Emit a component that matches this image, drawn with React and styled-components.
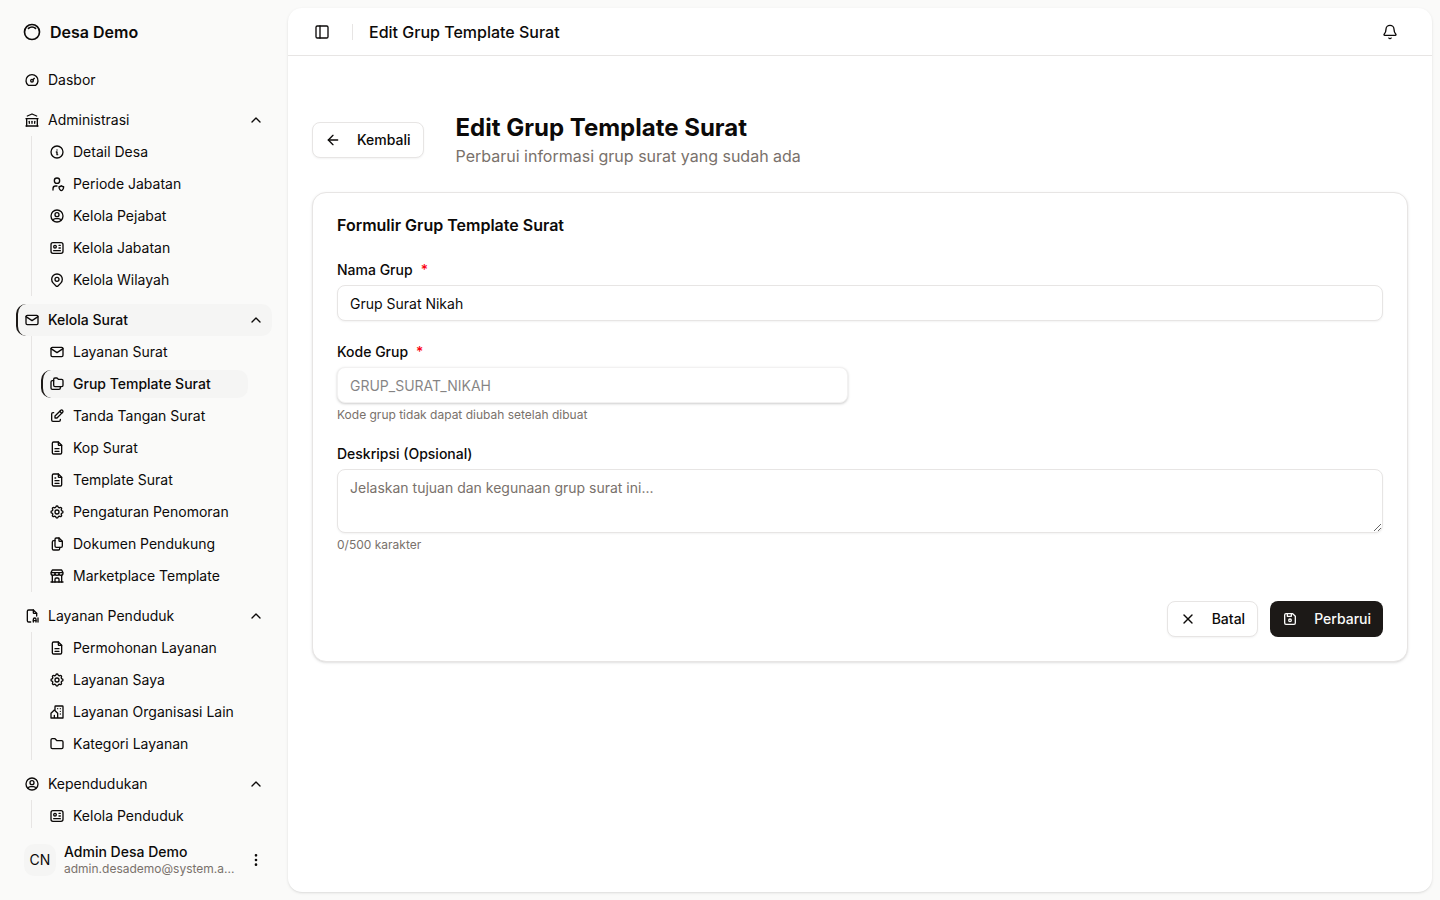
import React, { useState } from "react";
import styled, { createGlobalStyle, css } from "styled-components";
import { ArrowLeft, Bell, ChevronUp, PanelLeft, X } from "lucide-react";
import {
  TbBuildingBank,
  TbBuildingCommunity,
  TbBuildingStore,
  TbDashboard,
  TbDeviceFloppy,
  TbDotsVertical,
  TbEdit,
  TbFileAi,
  TbFileDescription,
  TbFiles,
  TbFileText,
  TbFolder,
  TbFolders,
  TbId,
  TbInfoCircle,
  TbInnerShadowTop,
  TbMail,
  TbMapPin,
  TbSettings,
  TbUserCircle,
  TbUserShield,
} from "react-icons/tb";

const GlobalStyle = createGlobalStyle`
  *, *::before, *::after { box-sizing: border-box; }
  body {
    margin: 0;
    background: #fafaf9;
    color: #0c0a09;
    font-family: Inter, "Liberation Sans", sans-serif;
    font-size: 14px;
    line-height: 20px;
  }
  h1, h2, p { margin: 0; }
  button, input, textarea { font: inherit; color: inherit; }
  svg { flex-shrink: 0; }
`;

const Shell = styled.div`
  display: flex;
  height: 100vh;
`;

const Sidebar = styled.aside`
  display: flex;
  flex-direction: column;
  flex: 0 0 288px;
  min-width: 0;
  padding: 8px;
`;

const Brand = styled.a`
  display: flex;
  align-items: center;
  gap: 8px;
  height: 32px;
  margin: 8px 8px 16px;
  padding: 0 6px;
  color: inherit;
  font-size: 16px;
  font-weight: 600;
  text-decoration: none;
`;

const Nav = styled.nav`
  display: flex;
  flex-direction: column;
  flex: 1;
  gap: 8px;
  min-height: 0;
  padding: 0 8px;
  overflow: hidden;
`;

const itemStyles = css`
  display: flex;
  align-items: center;
  flex-shrink: 0;
  gap: 8px;
  width: 100%;
  padding: 0 8px;
  border: 0;
  border-radius: 10px;
  background: ${(p) => (p.$active ? "#f5f5f4" : "transparent")};
  color: inherit;
  font-weight: ${(p) => (p.$active ? 500 : 400)};
  text-align: left;
  text-decoration: none;
  white-space: nowrap;
  cursor: pointer;
  ${(p) =>
    p.$active &&
    css`
      padding-left: 6px;
      border-left: 2px solid #1c1917;
    `}
`;

const TopLink = styled.a`
  ${itemStyles}
  height: 32px;
`;

const GroupButton = styled.button`
  ${itemStyles}
  height: 32px;
`;

const GroupLabel = styled.span`
  flex: 1;
`;

const SubList = styled.ul`
  display: flex;
  flex-direction: column;
  gap: 4px;
  margin: 0 24px 0 15px;
  padding: 2px 0 2px 9px;
  border-left: 1px solid #e7e5e4;
  list-style: none;
`;

const SubLink = styled.a`
  ${itemStyles}
  height: 28px;
`;

const UserButton = styled.button`
  display: flex;
  align-items: center;
  gap: 8px;
  height: 48px;
  margin: 8px;
  padding: 0 8px;
  border: 0;
  background: transparent;
  text-align: left;
  cursor: pointer;
`;

const Avatar = styled.span`
  display: grid;
  place-items: center;
  flex: 0 0 32px;
  height: 32px;
  border-radius: 10px;
  background: #f5f5f4;
`;

const UserText = styled.span`
  display: grid;
  flex: 1;
  min-width: 0;
`;

const UserName = styled.span`
  font-weight: 500;
  line-height: 18px;
`;

const UserMail = styled.span`
  overflow: hidden;
  color: #79716b;
  font-size: 12px;
  line-height: 16px;
  text-overflow: ellipsis;
  white-space: nowrap;
`;

const Panel = styled.main`
  display: flex;
  flex-direction: column;
  flex: 1;
  min-width: 0;
  margin: 8px 8px 8px 0;
  border-radius: 14px;
  background: #fff;
  box-shadow: 0 1px 3px rgba(0, 0, 0, 0.1), 0 1px 2px -1px rgba(0, 0, 0, 0.1);
`;

const TopBar = styled.header`
  display: flex;
  align-items: center;
  flex: 0 0 48px;
  padding: 0 24px;
  border-bottom: 1px solid #e7e5e4;
`;

const IconButton = styled.button`
  display: grid;
  place-items: center;
  width: 36px;
  height: 28px;
  padding: 0;
  border: 0;
  background: transparent;
  cursor: pointer;
`;

const SidebarToggle = styled(IconButton)`
  width: 28px;
  margin-left: -4px;
`;

const Divider = styled.span`
  width: 1px;
  height: 16px;
  margin: 0 16px;
  background: #e7e5e4;
`;

const TopTitle = styled.span`
  flex: 1;
  font-size: 16px;
  font-weight: 500;
`;

const Content = styled.div`
  display: flex;
  flex-direction: column;
  gap: 24px;
  padding: 56px 24px 24px;
`;

const PageHead = styled.div`
  display: flex;
  align-items: center;
  gap: 32px;
`;

const PageTitle = styled.h1`
  font-size: 24px;
  font-weight: 700;
  line-height: 32px;
`;

const PageLead = styled.p`
  color: #79716b;
  font-size: 16px;
  line-height: 24px;
`;

const Button = styled.button`
  display: inline-flex;
  align-items: center;
  gap: 16px;
  height: 36px;
  padding: 0 12px;
  border: ${(p) => (p.$primary ? "0" : "1px solid #e7e5e4")};
  border-radius: 8px;
  background: ${(p) => (p.$primary ? "#1c1917" : "#fff")};
  box-shadow: ${(p) => (p.$primary ? "none" : "0 1px 2px rgba(0, 0, 0, 0.05)")};
  color: ${(p) => (p.$primary ? "#fafaf9" : "inherit")};
  font-weight: 500;
  white-space: nowrap;
  cursor: pointer;
`;

const Card = styled.form`
  display: flex;
  flex-direction: column;
  gap: 24px;
  padding: 24px;
  border: 1px solid #e7e5e4;
  border-radius: 14px;
  background: #fff;
  box-shadow: 0 1px 3px rgba(0, 0, 0, 0.1), 0 1px 2px -1px rgba(0, 0, 0, 0.1);
`;

const CardTitle = styled.h2`
  margin-bottom: 6px;
  font-size: 16px;
  font-weight: 600;
  line-height: 16px;
`;

const FieldGrid = styled.div`
  display: grid;
  grid-template-columns: repeat(2, minmax(0, 1fr));
  gap: 24px;
`;

const Field = styled.div`
  display: flex;
  flex-direction: column;
`;

const Label = styled.label`
  display: flex;
  gap: 8px;
  margin-bottom: 8px;
  font-weight: 500;
  line-height: 14px;
`;

const Required = styled.span`
  color: #fb0010;
`;

const controlStyles = css`
  width: 100%;
  border: 1px solid #e7e5e4;
  border-radius: 8px;
  background: #fff;
  box-shadow: 0 1px 2px rgba(0, 0, 0, 0.05);
  outline: none;
`;

const Input = styled.input`
  ${controlStyles}
  height: 36px;
  padding: 4px 12px;

  &:disabled {
    box-shadow: 0 1px 3px rgba(0, 0, 0, 0.2), 0 1px 2px rgba(0, 0, 0, 0.2);
    opacity: 0.5;
  }
`;

const TextArea = styled.textarea`
  ${controlStyles}
  display: block;
  height: 64px;
  padding: 8px 12px;
  resize: vertical;

  &::placeholder {
    color: #79716b;
  }
`;

const Hint = styled.p`
  margin-top: 4px;
  color: #79716b;
  font-size: 12px;
  line-height: 16px;
`;

const Actions = styled.div`
  display: flex;
  justify-content: flex-end;
  gap: 12px;
  padding-top: 24px;
`;

const groups = [
  {
    label: "Administrasi",
    icon: TbBuildingBank,
    items: [
      ["Detail Desa", TbInfoCircle],
      ["Periode Jabatan", TbUserShield],
      ["Kelola Pejabat", TbUserCircle],
      ["Kelola Jabatan", TbId],
      ["Kelola Wilayah", TbMapPin],
    ],
  },
  {
    label: "Kelola Surat",
    icon: TbMail,
    active: true,
    items: [
      ["Layanan Surat", TbMail],
      ["Grup Template Surat", TbFolders],
      ["Tanda Tangan Surat", TbEdit],
      ["Kop Surat", TbFileDescription],
      ["Template Surat", TbFileText],
      ["Pengaturan Penomoran", TbSettings],
      ["Dokumen Pendukung", TbFiles],
      ["Marketplace Template", TbBuildingStore],
    ],
  },
  {
    label: "Layanan Penduduk",
    icon: TbFileAi,
    items: [
      ["Permohonan Layanan", TbFileDescription],
      ["Layanan Saya", TbSettings],
      ["Layanan Organisasi Lain", TbBuildingCommunity],
      ["Kategori Layanan", TbFolder],
    ],
  },
  {
    label: "Kependudukan",
    icon: TbUserCircle,
    items: [["Kelola Penduduk", TbId]],
  },
];

const activePage = "Grup Template Surat";

function NavGroup({ group }) {
  const Icon = group.icon;
  return (
    <div>
      <GroupButton type="button" $active={group.active} aria-expanded="true">
        <Icon size={16} />
        <GroupLabel>{group.label}</GroupLabel>
        <ChevronUp size={16} />
      </GroupButton>
      <SubList>
        {group.items.map(([label, ItemIcon]) => (
          <li key={label}>
            <SubLink href="#" $active={label === activePage}>
              <ItemIcon size={16} />
              {label}
            </SubLink>
          </li>
        ))}
      </SubList>
    </div>
  );
}

export default function App() {
  const [name, setName] = useState("Grup Surat Nikah");
  const [description, setDescription] = useState("");

  return (
    <>
      <GlobalStyle />
      <Shell>
        <Sidebar>
          <Brand href="#">
            <TbInnerShadowTop size={20} />
            Desa Demo
          </Brand>
          <Nav>
            <TopLink href="#">
              <TbDashboard size={16} />
              Dasbor
            </TopLink>
            {groups.map((group) => (
              <NavGroup key={group.label} group={group} />
            ))}
          </Nav>
          <UserButton type="button">
            <Avatar>CN</Avatar>
            <UserText>
              <UserName>Admin Desa Demo</UserName>
              <UserMail>admin.desademo@system.a...</UserMail>
            </UserText>
            <TbDotsVertical size={16} />
          </UserButton>
        </Sidebar>

        <Panel>
          <TopBar>
            <SidebarToggle type="button" aria-label="Bilah sisi">
              <PanelLeft size={16} />
            </SidebarToggle>
            <Divider />
            <TopTitle>Edit Grup Template Surat</TopTitle>
            <IconButton type="button" aria-label="Notifikasi">
              <Bell size={16} />
            </IconButton>
          </TopBar>

          <Content>
            <PageHead>
              <Button type="button">
                <ArrowLeft size={16} />
                Kembali
              </Button>
              <div>
                <PageTitle>Edit Grup Template Surat</PageTitle>
                <PageLead>Perbarui informasi grup surat yang sudah ada</PageLead>
              </div>
            </PageHead>

            <Card onSubmit={(e) => e.preventDefault()}>
              <CardTitle>Formulir Grup Template Surat</CardTitle>
              <Field>
                <Label htmlFor="name">
                  Nama Grup <Required>*</Required>
                </Label>
                <Input id="name" value={name} onChange={(e) => setName(e.target.value)} />
              </Field>
              <FieldGrid>
                <Field>
                  <Label htmlFor="code">
                    Kode Grup <Required>*</Required>
                  </Label>
                  <Input id="code" value="GRUP_SURAT_NIKAH" disabled readOnly />
                  <Hint>Kode grup tidak dapat diubah setelah dibuat</Hint>
                </Field>
              </FieldGrid>
              <Field>
                <Label htmlFor="description">Deskripsi (Opsional)</Label>
                <TextArea
                  id="description"
                  maxLength={500}
                  placeholder="Jelaskan tujuan dan kegunaan grup surat ini..."
                  value={description}
                  onChange={(e) => setDescription(e.target.value)}
                />
                <Hint>{description.length}/500 karakter</Hint>
              </Field>
              <Actions>
                <Button type="button">
                  <X size={16} />
                  Batal
                </Button>
                <Button type="submit" $primary>
                  <TbDeviceFloppy size={16} />
                  Perbarui
                </Button>
              </Actions>
            </Card>
          </Content>
        </Panel>
      </Shell>
    </>
  );
}
